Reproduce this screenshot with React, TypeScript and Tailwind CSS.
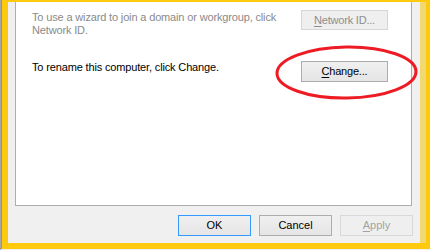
import React from "react";

const Y = "bg-[#ffc90e]";

function Btn({
  children,
  className = "",
}: {
  children: React.ReactNode;
  className?: string;
}) {
  return (
    <div
      className={
        "flex items-center justify-center text-[11px] leading-none " + className
      }
    >
      {children}
    </div>
  );
}

export default function App() {
  return (
    <div
      className="relative w-[430px] h-[250px] flex flex-col overflow-hidden bg-[#f0f0f0]"
      style={{ fontFamily: '"Liberation Sans", Arial, sans-serif' }}
    >
      <div className="flex h-[249px]">
        <div className="w-px bg-[#a8a8a8]" />
        <div className="w-px bg-[#7398c8]" />
        <div className={"w-[5px] " + Y} />
        <div className="w-px flex flex-col">
          <div className="flex-1 bg-[#d9c57a]" />
          <div className={"h-[6px] " + Y} />
        </div>
        {/* dialog area */}
        <div className="w-[412px] flex flex-col">
          <div className={"h-[2px] " + Y} />
          <div className="flex-1 flex flex-col bg-[#f0f0f0]">
            <div className="ml-[7px] w-[397px] h-[204px] bg-white border-x border-b border-[#adadad] pl-[16px] pr-[23px] pt-[8px] flex flex-col">
              <div className="flex items-start justify-between">
                <div className="text-[11px] leading-[13px] tracking-[-0.15px] text-[#8a8a8a] pt-[1px]">
                  <div>To use a wizard to join a domain or workgroup, click</div>
                  <div>Network ID.</div>
                </div>
                <Btn className="w-[87px] h-[20px] border border-[#d5d5d5] bg-[#efefef] text-[#8d8d8d] tracking-[-0.2px]">
                  <span>
                    <span className="underline underline-offset-2">N</span>
                    etwork ID...
                  </span>
                </Btn>
              </div>
              <div className="flex items-start justify-between mt-[24px]">
                <div className="text-[11px] leading-[13px] tracking-[-0.15px] text-black">
                  To rename this computer, click Change.
                </div>
                <Btn className="w-[87px] h-[21px] border border-[#adadad] bg-gradient-to-b from-[#f0f0f0] to-[#e5e5e5] text-black tracking-[-0.2px]">
                  <span>
                    <span className="underline underline-offset-2">C</span>
                    hange...
                  </span>
                </Btn>
              </div>
            </div>
            <div className="mt-[9px] flex justify-end gap-[8px] pr-[7px]">
              <Btn className="w-[73px] h-[21px] border border-[#3399ff] bg-gradient-to-b from-[#f0f0f0] to-[#e5e5e5] text-black">
                OK
              </Btn>
              <Btn className="w-[73px] h-[21px] border border-[#adadad] bg-gradient-to-b from-[#f0f0f0] to-[#e5e5e5] text-black">
                Cancel
              </Btn>
              <Btn className="w-[73px] h-[21px] border border-[#d9d9d9] bg-[#efefef] text-[#a3a3a3]">
                <span>
                  <span className="underline underline-offset-2">A</span>
                  pply
                </span>
              </Btn>
            </div>
          </div>
          <div className={"h-[6px] " + Y} />
        </div>
        <div className="w-[6px] flex flex-col">
          <div className={"h-[2px] " + Y} />
          <div className="flex-1 bg-[#f0d972]" />
          <div className={"h-[6px] " + Y} />
        </div>
        <div className={"w-[4px] " + Y} />
      </div>
      <div className="h-px flex">
        <div className="w-px bg-[#a8a8a8]" />
        <div className="flex-1 bg-[#f0f0f0]" />
      </div>

      {/* red annotation ellipse */}
      <svg
        className="absolute left-[275px] top-[45px]"
        width="144"
        height="56"
        viewBox="0 0 144 56"
      >
        <ellipse
          cx="71.5"
          cy="27.5"
          rx="69.5"
          ry="25.5"
          fill="none"
          stroke="#ed1c24"
          strokeWidth="3"
          transform="rotate(-0.8 71.5 27.5)"
        />
      </svg>
    </div>
  );
}
